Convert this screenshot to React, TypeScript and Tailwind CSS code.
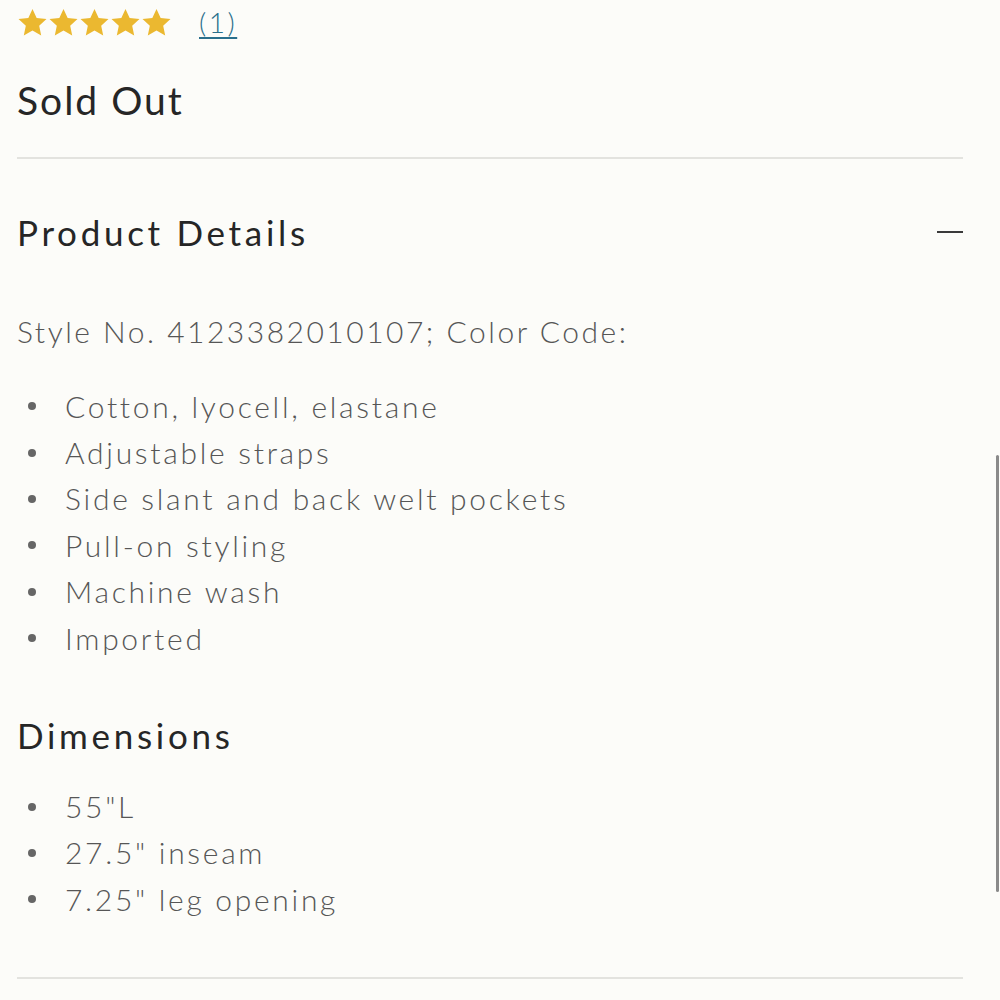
import React from "react";

const Star = () => (
  <svg width="31" height="29" viewBox="0 0 24 23" className="block">
    <path d="M12 0.8l3.3 7.1 7.8 0.9-5.8 5.3 1.6 7.7L12 17.9l-6.9 3.9 1.6-7.7L0.9 8.8l7.8-0.9z" fill="#EBB830" />
  </svg>
);

const details = [
  "Cotton, lyocell, elastane",
  "Adjustable straps",
  "Side slant and back welt pockets",
  "Pull-on styling",
  "Machine wash",
  "Imported",
];

const dims = ['55"L', '27.5" inseam', '7.25" leg opening'];

function Bullets({ items }: { items: string[] }) {
  return (
    <ul className="flex flex-col">
      {items.map((t) => (
        <li key={t} className="flex items-center h-[46.4px] text-[30px] font-light tracking-[2.7px] text-[#565656]">
          <span className="w-[8px] h-[8px] rounded-full bg-[#666666] ml-[11px] mr-[29px] shrink-0" />
          <span className="whitespace-pre">{t}</span>
        </li>
      ))}
    </ul>
  );
}

export default function App() {
  return (
    <div
      className="relative w-[1000px] h-[1000px] overflow-hidden bg-[#fcfcf9]"
      style={{ fontFamily: "Lato, 'Noto Sans', sans-serif" }}
    >
      <div className="pl-[17px] pr-[37px]">
        <div className="flex items-center h-[44px]">
          <div className="flex">
            <Star />
            <Star />
            <Star />
            <Star />
            <Star />
          </div>
          <a className="ml-[27px] text-[28px] font-light text-[#2a6f8c] underline underline-offset-[4px] decoration-[1.5px] tracking-[2.5px]">
            (1)
          </a>
        </div>
        <div className="h-[113px] flex items-center text-[39px] tracking-[2px] text-[#262626]">
          Sold Out
        </div>
        <div className="h-[2px] bg-[#e3e3df]" />
        <div className="h-[146px] flex items-center justify-between">
          <span className="text-[35px] tracking-[3.7px] text-[#262626]">Product Details</span>
          <span className="block w-[26px] h-[2px] bg-[#3a3a3a]" />
        </div>
        <div className="h-[52px] flex items-center text-[30px] font-light tracking-[2.5px] text-[#565656]">
          Style No. 4123382010107; Color Code:
        </div>
        <div className="mt-[26px]">
          <Bullets items={details} />
        </div>
        <div className="h-[122px] pt-[26px] flex items-center text-[35px] tracking-[3.7px] text-[#262626]">
          Dimensions
        </div>
        <Bullets items={dims} />
        <div className="h-[54px]" />
        <div className="h-[2px] bg-[#e3e3df]" />
      </div>
      <div className="absolute right-[1px] top-[455px] w-[3px] h-[437px] rounded-full bg-[#8a8a8a]" />
    </div>
  );
}
